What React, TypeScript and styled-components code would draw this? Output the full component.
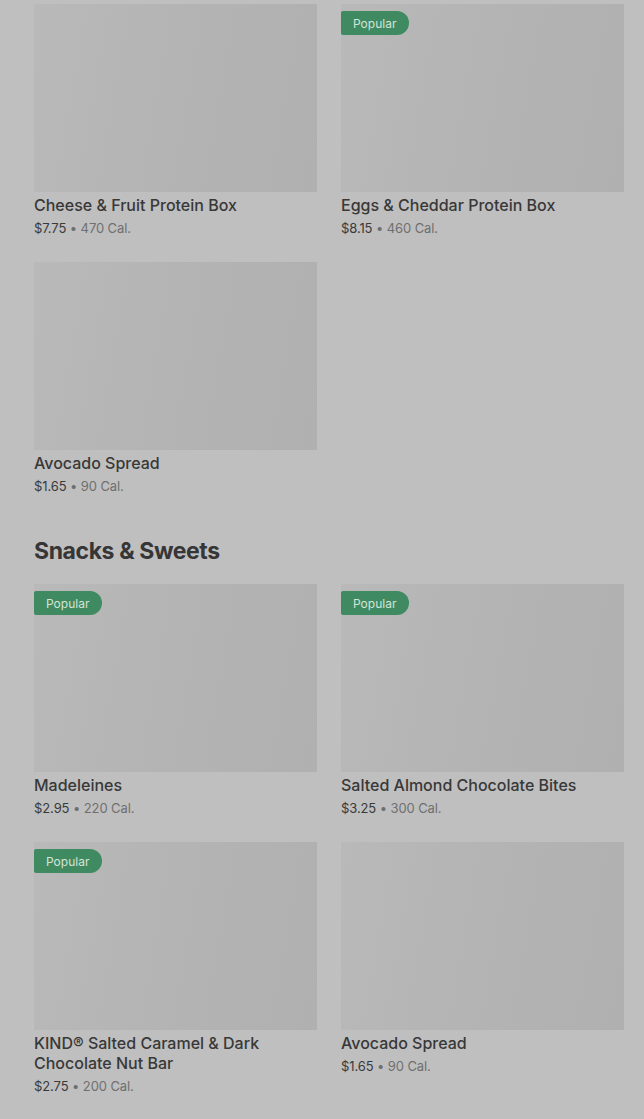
import React from "react";
import styled, { createGlobalStyle } from "styled-components";

const GlobalStyle = createGlobalStyle`
  html, body {
    margin: 0;
    padding: 0;
    background: #bfbfbf;
  }
  body {
    font-family: Inter, "Noto Sans", Arial, sans-serif;
    color: #373737;
  }
`;

const Page = styled.div`
  padding: 4px 20px 24px 34px;
`;

const Section = styled.section`
  & + & {
    margin-top: 40px;
  }
`;

const Heading = styled.h2`
  margin: 0 0 17px;
  font-size: 23px;
  line-height: 32px;
  font-weight: 700;
  letter-spacing: -0.4px;
  color: #363636;
`;

const Grid = styled.div`
  display: grid;
  grid-template-columns: 283px 283px;
  column-gap: 24px;
  row-gap: 25px;
`;

const Card = styled.div`
  display: flex;
  flex-direction: column;
`;

const Thumb = styled.div`
  position: relative;
  height: 188px;
  background: linear-gradient(100deg, #b9b9b9 0%, #b4b4b4 45%, #b0b0b0 100%);
`;

const Badge = styled.span`
  position: absolute;
  top: 7px;
  left: 0;
  height: 24px;
  padding: 0 13px 0 12px;
  display: flex;
  align-items: center;
  background: #3f8a61;
  color: #d3e4d8;
  font-size: 12px;
  border-radius: 2px 12px 12px 2px;
`;

const Title = styled.div`
  margin-top: 3px;
  font-size: 16px;
  line-height: 20px;
  font-weight: 500;
  color: #383838;
  max-width: 240px;
`;

const Meta = styled.div`
  margin-top: 4px;
  font-size: 13px;
  line-height: 18px;
  color: #6f6f6f;
  letter-spacing: -0.1px;

  b {
    font-weight: 400;
    color: #3a3a3a;
  }
`;

type Item = {
  name: string;
  price: string;
  cal: number;
  popular?: boolean;
};

const sections: { title?: string; items: Item[] }[] = [
  {
    items: [
      { name: "Cheese & Fruit Protein Box", price: "$7.75", cal: 470 },
      { name: "Eggs & Cheddar Protein Box", price: "$8.15", cal: 460, popular: true },
      { name: "Avocado Spread", price: "$1.65", cal: 90 },
    ],
  },
  {
    title: "Snacks & Sweets",
    items: [
      { name: "Madeleines", price: "$2.95", cal: 220, popular: true },
      { name: "Salted Almond Chocolate Bites", price: "$3.25", cal: 300, popular: true },
      { name: "KIND® Salted Caramel & Dark Chocolate Nut Bar", price: "$2.75", cal: 200, popular: true },
      { name: "Avocado Spread", price: "$1.65", cal: 90 },
    ],
  },
];

function MenuCard({ item }: { item: Item }) {
  return (
    <Card>
      <Thumb>{item.popular && <Badge>Popular</Badge>}</Thumb>
      <Title>{item.name}</Title>
      <Meta>
        <b>{item.price}</b> • {item.cal} Cal.
      </Meta>
    </Card>
  );
}

export default function App() {
  return (
    <>
      <GlobalStyle />
      <Page>
        {sections.map((s, i) => (
          <Section key={i}>
            {s.title && <Heading>{s.title}</Heading>}
            <Grid>
              {s.items.map((item, j) => (
                <MenuCard key={j} item={item} />
              ))}
            </Grid>
          </Section>
        ))}
      </Page>
    </>
  );
}
